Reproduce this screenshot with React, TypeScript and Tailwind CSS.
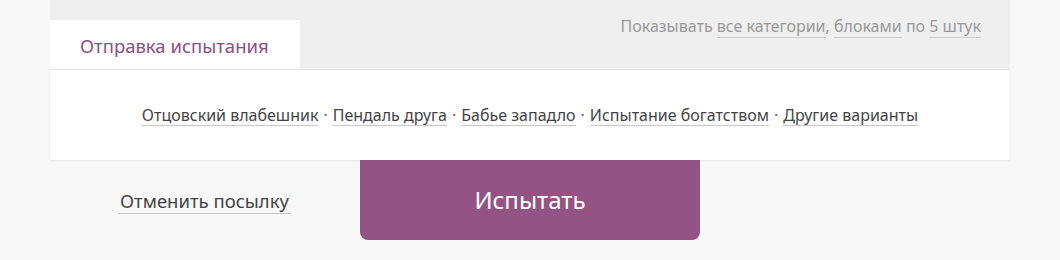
import React from "react";

const links = [
  "Отцовский влабешник",
  "Пендаль друга",
  "Бабье западло",
  "Испытание богатством",
  "Другие варианты",
];

export default function App() {
  return (
    <div
      className="w-[1060px] h-[260px] bg-[#f8f8f8] overflow-hidden"
      style={{ fontFamily: '"Noto Sans", "Open Sans", sans-serif' }}
    >
      <div className="mx-[50px] w-[960px]">
        <div className="h-[69px] bg-[#efefef] flex items-end justify-between">
          <div className="w-[250px] h-[49px] bg-white flex items-center pl-[30px] pt-[2px] text-[18.5px] text-[#8f4c82]">
            Отправка испытания
          </div>
          <div className="self-start pt-[15px] pr-[29px] text-[16px] text-[#9a9a9a] leading-[22px]">
            Показывать{" "}
            <span className="border-b border-[#cfcfcf]">все категории</span>,{" "}
            <span className="border-b border-[#cfcfcf]">блоками</span> по{" "}
            <span className="border-b border-[#cfcfcf]">5 штук</span>
          </div>
        </div>
        <div className="h-[91px] bg-white border-t border-[#e6e6e6] shadow-[0_1px_2px_rgba(0,0,0,0.08)] flex items-center justify-center text-[16px] text-[#444]">
          {links.map((l, i) => (
            <React.Fragment key={l}>
              {i > 0 && <span className="text-[#666] mx-[5px]">·</span>}
              <span className="border-b border-[#c8c8c8] leading-[20px]">{l}</span>
            </React.Fragment>
          ))}
        </div>
      </div>
      <div className="flex items-start mx-[50px]">
        <div className="w-[310px] h-[80px] flex items-center pl-[68px] pt-[2px]">
          <span className="text-[18.5px] text-[#444] border-b border-[#c8c8c8] leading-[24px] px-[2px]">
            Отменить посылку
          </span>
        </div>
        <button className="w-[340px] h-[80px] bg-[#935385] rounded-b-[8px] text-white text-[24px] flex items-center justify-center">
          Испытать
        </button>
      </div>
    </div>
  );
}
